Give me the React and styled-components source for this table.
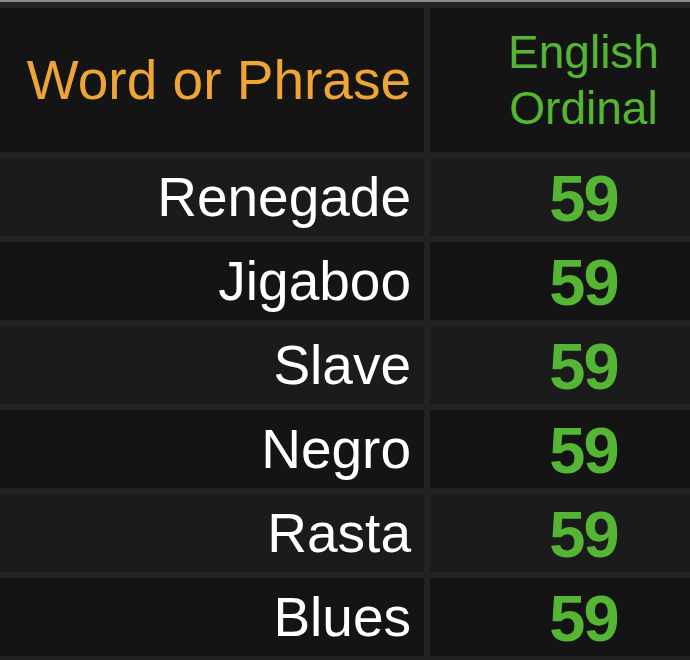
import React from "react";
import styled, { createGlobalStyle } from "styled-components";

const GlobalStyle = createGlobalStyle`
  html, body {
    margin: 0;
    padding: 0;
    background: #222222;
    overflow: hidden;
  }
`;

const Page = styled.div`
  width: 690px;
  height: 660px;
  overflow: hidden;
  border-top: 2px solid #8c8c8c;
  background-color: #222222;
  box-sizing: border-box;
`;

const Table = styled.div`
  display: grid;
  grid-template-columns: 424px 307px;
  grid-template-rows: 144px;
  grid-auto-rows: 78px;
  gap: 6px;
  padding: 6px 0;
  width: 737px;
  font-family: "Liberation Sans", Arial, Helvetica, sans-serif;
`;

const HeadCell = styled.div`
  display: flex;
  align-items: center;
  justify-content: ${(props) => (props.center ? "center" : "flex-end")};
  padding-right: ${(props) => (props.center ? "0" : "13px")};
  background-color: #141414;
  color: ${(props) => props.color};
  font-size: ${(props) => props.size}px;
  line-height: 56px;
  text-align: center;
`;

const WordCell = styled.div`
  display: flex;
  align-items: center;
  justify-content: flex-end;
  padding-right: 13px;
  background-color: ${(props) => (props.odd ? "#1b1b1b" : "#141414")};
  color: #ffffff;
  font-size: 55px;
`;

const ValueCell = styled.div`
  display: flex;
  align-items: center;
  justify-content: center;
  background-color: ${(props) => (props.odd ? "#1b1b1b" : "#141414")};
  color: #55b535;
  font-size: 65px;
  font-weight: 700;
  letter-spacing: -2px;
  padding-top: 2px;
`;

const rows = [
  { word: "Renegade", value: 59 },
  { word: "Jigaboo", value: 59 },
  { word: "Slave", value: 59 },
  { word: "Negro", value: 59 },
  { word: "Rasta", value: 59 },
  { word: "Blues", value: 59 },
];

export default function App() {
  return (
    <>
      <GlobalStyle />
      <Page>
        <Table>
          <HeadCell color="#eea535" size={55}>
            Word or Phrase
          </HeadCell>
          <HeadCell color="#55b535" size={46} center>
            English
            <br />
            Ordinal
          </HeadCell>
          {rows.map((item, index) => (
            <React.Fragment key={index}>
              <WordCell odd={index % 2 === 0}>{item.word}</WordCell>
              <ValueCell odd={index % 2 === 0}>{item.value}</ValueCell>
            </React.Fragment>
          ))}
        </Table>
      </Page>
    </>
  );
}
